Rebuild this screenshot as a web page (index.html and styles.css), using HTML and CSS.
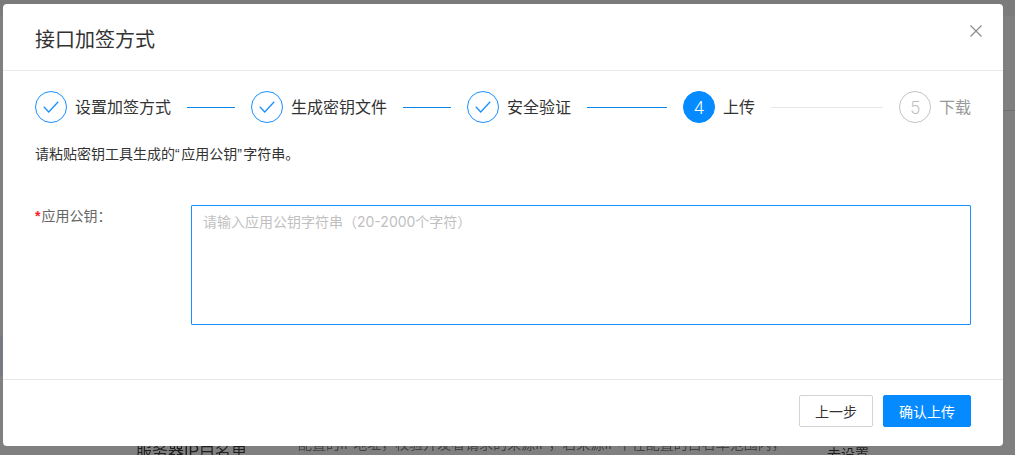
FILE: index.html
```html
<!DOCTYPE html>
<html lang="zh">
<head>
<meta charset="utf-8">
<title>接口加签方式</title>
<link rel="stylesheet" href="styles.css">
</head>
<body>
<div class="backdrop">
  <div class="bg-top"></div>
  <div class="bg-nav"></div>
  <div class="bg-rule"></div>
  <div class="bg-row">
    <span class="bg-title">服务器IP白名单</span>
    <span class="bg-desc">配置的IP地址，校验开发者请求的来源IP，若来源IP不在配置的白名单范围内，</span>
    <span class="bg-link">去设置</span>
  </div>
</div>
<div class="modal">
  <header class="modal-header">
    <h1 class="modal-title">接口加签方式</h1>
    <svg class="close" viewBox="0 0 12 12" width="12" height="12"><path d="M.5.5l11 11M11.5.5l-11 11" fill="none" stroke="#8c8c8c" stroke-width="1.2"/></svg>
  </header>
  <div class="modal-body">
    <div class="steps">
      <div class="step done">
        <span class="dot"><svg viewBox="0 0 16 12" width="16" height="12"><path d="M.8 5.8l5 5.2L15.2.8" fill="none" stroke="#1890ff" stroke-width="1.3"/></svg></span>
        <span class="label">设置加签方式</span>
      </div>
      <div class="line on"></div>
      <div class="step done">
        <span class="dot"><svg viewBox="0 0 16 12" width="16" height="12"><path d="M.8 5.8l5 5.2L15.2.8" fill="none" stroke="#1890ff" stroke-width="1.3"/></svg></span>
        <span class="label">生成密钥文件</span>
      </div>
      <div class="line on"></div>
      <div class="step done">
        <span class="dot"><svg viewBox="0 0 16 12" width="16" height="12"><path d="M.8 5.8l5 5.2L15.2.8" fill="none" stroke="#1890ff" stroke-width="1.3"/></svg></span>
        <span class="label">安全验证</span>
      </div>
      <div class="line on long"></div>
      <div class="step active">
        <span class="dot">4</span>
        <span class="label">上传</span>
      </div>
      <div class="line wide"></div>
      <div class="step todo">
        <span class="dot">5</span>
        <span class="label">下载</span>
      </div>
    </div>
    <p class="hint">请粘贴密钥工具生成的<span class="quote">“</span>应用公钥<span class="quote">”</span>字符串。</p>
    <div class="field">
      <label class="field-label"><span class="req">*</span>应用公钥：</label>
      <textarea class="input" placeholder="请输入应用公钥字符串（20-2000个字符）"></textarea>
    </div>
  </div>
  <footer class="modal-footer">
    <button class="btn" type="button">上一步</button>
    <button class="btn primary" type="button">确认上传</button>
  </footer>
</div>
</body>
</html>
```
FILE: styles.css
```css
* { box-sizing: border-box; }
html, body { margin: 0; height: 100%; overflow: hidden; }
body {
  position: relative;
  width: 1015px;
  height: 455px;
  background: #808080;
  font-family: "Liberation Sans", "Noto Sans CJK SC", sans-serif;
}
.backdrop { position: absolute; inset: 0; }
.bg-top { position: absolute; left: 0; right: 0; top: 0; height: 16px; background: #7b7b7b; }
.bg-nav { position: absolute; left: 0; top: 336px; width: 3px; height: 40px; background: #777a85; }
.bg-rule { position: absolute; right: 0; top: 110px; width: 12px; height: 1px; background: #707070; }
.bg-row { position: absolute; left: 0; right: 0; top: 436px; height: 19px; color: #1f1f1f; filter: blur(0.4px); }
.bg-title { position: absolute; left: 136px; top: 6px; font-size: 16px; line-height: 20px; }
.bg-desc { position: absolute; left: 298px; top: -2px; font-size: 14px; line-height: 20px; color: #444; }
.bg-link { position: absolute; left: 827px; top: 8px; font-size: 14px; line-height: 20px; }
.modal {
  position: absolute;
  left: 3px;
  top: 4px;
  width: 1000px;
  height: 442px;
  background: #fff;
  border-radius: 4px;
  display: flex;
  flex-direction: column;
}
.modal-header {
  height: 67px;
  flex: none;
  border-bottom: 1px solid #e8e8e8;
  padding: 0 32px;
  display: flex;
  align-items: center;
  justify-content: space-between;
}
.modal-title { margin: 6px 0 0; font-size: 20px; font-weight: 400; color: #333; line-height: 28px; }
.close { margin-right: -11px; margin-top: -12px; }
.modal-body { flex: 1; padding: 20px 32px 0; }
.steps { display: flex; align-items: center; height: 32px; }
.step { display: flex; align-items: center; flex: none; gap: 8px; }
.dot {
  width: 32px;
  height: 32px;
  border-radius: 50%;
  border: 1px solid #1890ff;
  display: flex;
  align-items: center;
  justify-content: center;
  font-family: Roboto, "Liberation Sans", sans-serif;
  font-weight: 300;
  font-size: 18px;
}
.label { font-size: 16px; line-height: 24px; color: #333; padding-top: 1px; }
.line { height: 1px; background: #e8e8e8; flex: none; width: 48px; margin: 0 16px; }
.line.on { background: #0a84e8; }
.line.long { width: 80px; }
.line.wide { width: 112px; }
.active .dot { background: #058bff; border-color: #058bff; color: #fff; }
.todo .dot { border-color: #c4c4c4; color: #bfbfbf; }
.todo .label { color: #999; }
.hint { margin: 20px 0 0; font-size: 14px; line-height: 22px; color: #333; }
.quote { letter-spacing: 1.5px; }
.field { display: flex; margin-top: 40px; }
.field-label { width: 156px; flex: none; font-size: 14px; line-height: 22px; color: #666; }
.req { color: #f5222d; font-weight: 700; margin-right: 1px; }
.input {
  width: 780px;
  height: 120px;
  border: 1px solid #1890ff;
  border-radius: 1px;
  padding: 5px 11px;
  font: 14px/22px Inter, "Noto Sans CJK SC", sans-serif;
  resize: none;
  outline: none;
  display: block;
}
.input::placeholder { color: #bfbfbf; opacity: 1; }
.modal-footer {
  height: 67px;
  flex: none;
  border-top: 1px solid #e8e8e8;
  padding: 0 32px 4px 0;
  display: flex;
  align-items: center;
  justify-content: flex-end;
  gap: 10px;
}
.btn {
  height: 32px;
  padding: 0 15px;
  font: 14px "Liberation Sans", "Noto Sans CJK SC", sans-serif;
  color: #333;
  background: #fff;
  border: 1px solid #d4d4d4;
  border-radius: 2px;
}
.btn.primary { background: #058bff; border-color: #058bff; color: #fff; }
```
